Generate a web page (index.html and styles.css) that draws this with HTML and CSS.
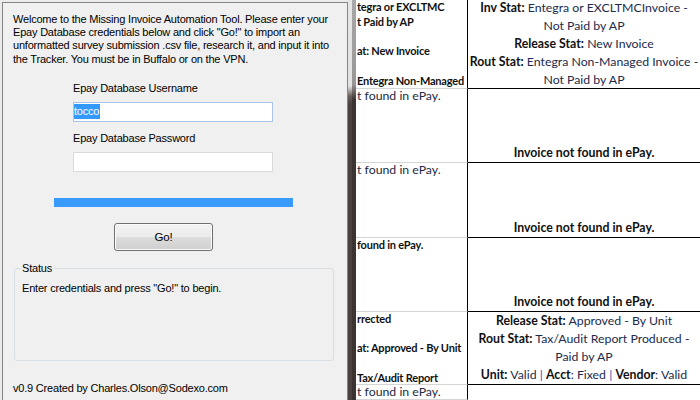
FILE: index.html
```html
<!DOCTYPE html>
<html>
<head>
<meta charset="utf-8">
<link rel="stylesheet" href="styles.css">
</head>
<body>
<div class="sheet">
  <div class="c1 b">tegra or EXCLTMC<br>t Paid by AP<br>&nbsp;<br>at: New Invoice<br>&nbsp;<br>Entegra Non-Managed</div>
  <div class="c2 mid"><div><b>Inv Stat:</b> <span class="v">Entegra or EXCLTMCInvoice -<br>Not Paid by AP</span><br><b>Release Stat:</b> <span class="v">New Invoice</span><br><b>Rout Stat:</b> <span class="v">Entegra Non-Managed Invoice -<br>Not Paid by AP</span></div></div>

  <div class="c1 reg">t found in ePay.</div>
  <div class="c2 end"><b>Invoice not found in ePay.</b></div>

  <div class="c1 reg">t found in ePay.</div>
  <div class="c2 end"><b>Invoice not found in ePay.</b></div>

  <div class="c1 b">found in ePay.</div>
  <div class="c2 end"><b>Invoice not found in ePay.</b></div>

  <div class="c1 b">rrected<br>&nbsp;<br>at: Approved - By Unit<br>&nbsp;<br>Tax/Audit Report</div>
  <div class="c2 mid"><div><b>Release Stat:</b> <span class="v">Approved - By Unit</span><br><b>Rout Stat:</b> <span class="v">Tax/Audit Report Produced -<br>Paid by AP</span><br><b>Unit:</b> <span class="v">Valid</span> <span class="pipe">|</span> <b>Acct</b><span class="v">: Fixed</span> <span class="pipe">|</span> <b>Vendor</b><span class="v">: Valid</span></div></div>

  <div class="c1 reg">t found in ePay.</div>
  <div class="c2 last"></div>
</div>

<div class="window">
  <div class="panel">
    <p class="intro">Welcome to the Missing Invoice Automation Tool. Please enter your<br>Epay Database credentials below and click "Go!" to import an<br>unformatted survey submission .csv file, research it, and input it into<br>the Tracker. You must be in Buffalo or on the VPN.</p>
    <div class="label first">Epay Database Username</div>
    <div class="textbox focused"><span class="sel">tocco</span></div>
    <div class="label second">Epay Database Password</div>
    <div class="textbox"></div>
    <div class="progress"></div>
    <div class="button"><span>Go!</span></div>
    <fieldset class="group">
      <legend>Status</legend>
      <p class="status">Enter credentials and press "Go!" to begin.</p>
    </fieldset>
    <p class="footer">v0.9 Created by Charles.Olson@Sodexo.com</p>
  </div>
  <div class="edge"><div class="edge-a"></div><div class="edge-b"></div></div>
</div>
</body>
</html>
```
FILE: styles.css
```css
html, body {
  margin: 0;
  padding: 0;
  width: 700px;
  height: 400px;
  overflow: hidden;
  background: #ffffff;
}

body {
  position: relative;
}

/* spreadsheet behind the dialog (only the part right of the dialog is visible) */
.sheet {
  display: grid;
  grid-template-columns: 112px 232px;
  grid-template-rows: 89px 74px 75px 74px 73px 1fr;
  margin-left: 356px;
  height: 400px;
  box-sizing: border-box;
  font-family: Lato, "Open Sans", sans-serif;
  color: #000;
}

.c1 {
  box-sizing: border-box;
  border-right: 1px solid #000;
  border-bottom: 1px solid #d4d4d4;
  line-height: 14.7px;
  white-space: nowrap;
  overflow: hidden;
  padding-left: 1px;
}

.c1.b {
  font-weight: 700;
  font-size: 11px;
  letter-spacing: -0.2px;
  color: #111;
}

.c1.reg {
  color: #222a44;
  font-size: 12.3px;
}

.c2 {
  box-sizing: border-box;
  border-bottom: 1px solid #000;
  font-size: 12.3px;
  line-height: 18px;
  text-align: center;
  white-space: nowrap;
  overflow: hidden;
  display: flex;
  justify-content: center;
  color: #111;
}

.c2.mid {
  align-items: center;
}

.c2.end {
  align-items: flex-end;
}

.c2.last {
  border-bottom: none;
}

.c2 b {
  font-weight: 700;
}

.v {
  color: #222a4c;
}

.pipe {
  color: #2a55b0;
}

/* dialog window */
.window {
  position: absolute;
  left: 0;
  top: 0;
  width: 356px;
  height: 400px;
  display: flex;
  box-sizing: border-box;
  padding: 2px 0 0 2px;
  background: #ebebeb;
  font-family: "Liberation Sans", Arial, sans-serif;
  font-size: 11px;
  letter-spacing: -0.2px;
  color: #000;
}

.panel {
  width: 346px;
  box-sizing: border-box;
  border: 1px solid #858585;
  border-bottom: none;
  background: #f0f0f0;
  padding-left: 10px;
  display: flex;
  flex-direction: column;
  align-items: flex-start;
}

.edge {
  width: 8px;
  display: flex;
  margin-top: -2px;
}

.edge-a {
  width: 4px;
  background: linear-gradient(to bottom, #e6e6e6 0, #e2e2e2 86px, #6a605c 96px, #4a423f 104px, #4a423f 100%);
}

.edge-b {
  width: 4px;
  background: linear-gradient(to bottom, #a8a8a8 0, #9a9696 84px, #3b3431 100px, #3b3431 100%);
}

.intro {
  margin: 9.6px 0 0 0;
  line-height: 13.33px;
  white-space: nowrap;
}

.label {
  margin-left: 60px;
  line-height: 13px;
  white-space: nowrap;
}

.label.first {
  margin-top: 16.5px;
}

.label.second {
  margin-top: 10.5px;
}

.textbox {
  margin: 6.5px 0 0 60px;
  width: 200px;
  height: 20px;
  box-sizing: border-box;
  border: 1px solid #dadada;
  background: #fff;
  padding: 1px 0 0 0;
  line-height: 15px;
}

.textbox.focused {
  border-color: #a9c6e8;
}

.sel {
  display: inline-block;
  background: #3399ff;
  color: #fff;
  padding: 0 1px 0 0;
  height: 15px;
}

.progress {
  margin: 26px 0 0 41px;
  width: 239px;
  height: 9px;
  background: #3a9bfc;
}

.button {
  margin: 16px 0 0 101px;
  width: 99px;
  height: 28px;
  box-sizing: border-box;
  border: 1px solid #707070;
  border-radius: 3px;
  background: linear-gradient(to bottom, #f2f2f2 0%, #ebebeb 50%, #dddddd 50%, #cfcfcf 100%);
  box-shadow: inset 0 0 0 1px #fbfbfb;
  display: flex;
  align-items: center;
  justify-content: center;
  font-size: 11.5px;
}

.group {
  margin: 11.5px 0 0 1px;
  width: 320px;
  height: 99px;
  box-sizing: border-box;
  border: 1px solid #d5dfe5;
  border-radius: 3px;
  padding: 7px 0 0 6px;
  min-inline-size: 0;
}

.group legend {
  padding: 0 1px;
  line-height: 13px;
}

.status {
  margin: 0 0 0 1px;
  line-height: 13px;
  white-space: nowrap;
}

.footer {
  margin: 20.5px 0 0 0;
  line-height: 13px;
  white-space: nowrap;
}
```
